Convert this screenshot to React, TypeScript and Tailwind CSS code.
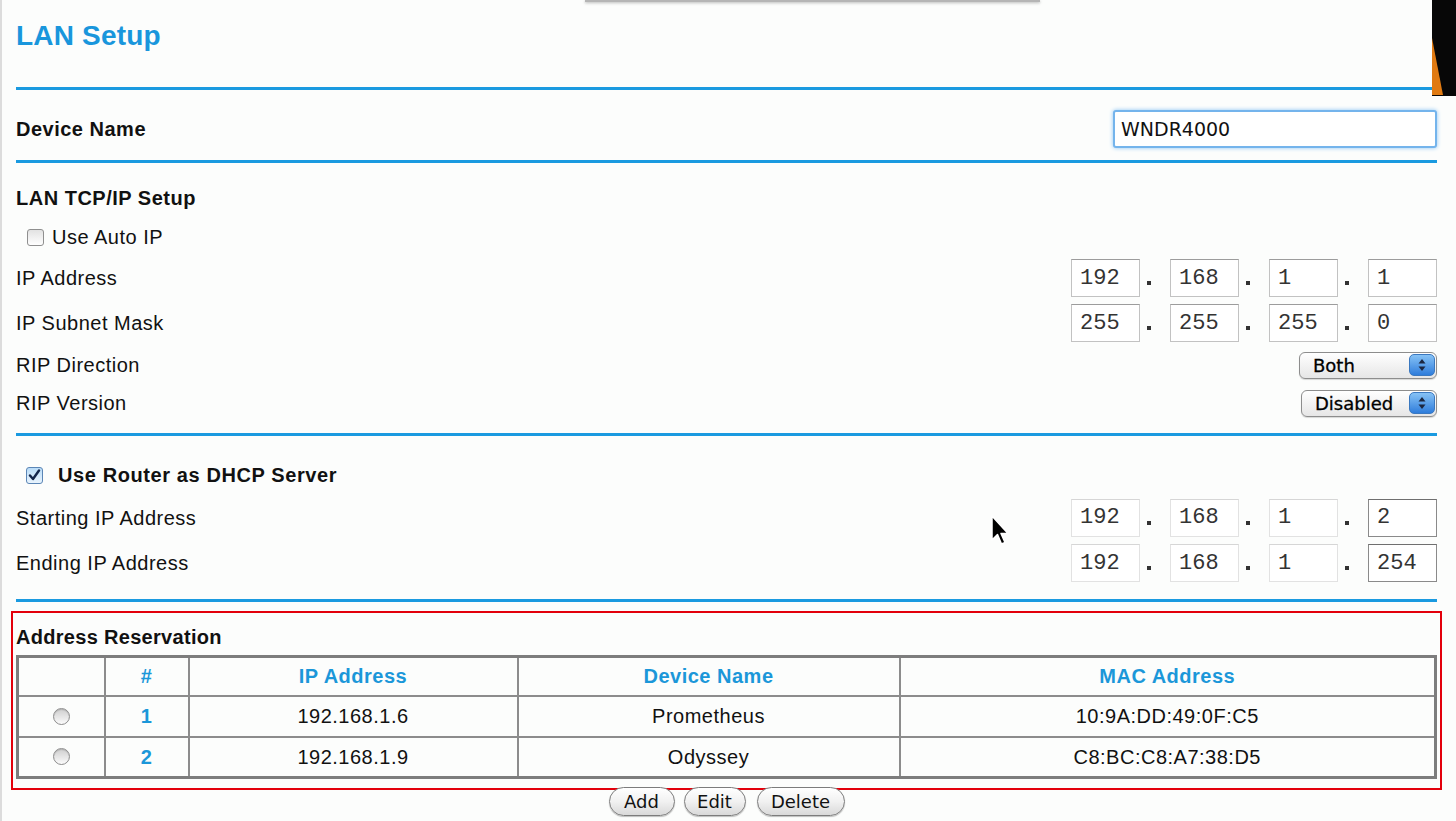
import React from "react";

const ipA = ["192", "168", "1", "1"];
const maskA = ["255", "255", "255", "0"];
const startA = ["192", "168", "1", "2"];
const endA = ["192", "168", "1", "254"];

const reservations = [
  { n: "1", ip: "192.168.1.6", name: "Prometheus", mac: "10:9A:DD:49:0F:C5" },
  { n: "2", ip: "192.168.1.9", name: "Odyssey", mac: "C8:BC:C8:A7:38:D5" },
];

const Rule = () => <div className="h-[3px] bg-[#1a9ae0]" />;

const IpFields = ({ values, faint }: { values: string[]; faint?: boolean }) => (
  <div className="flex items-center">
    {values.map((v, i) => {
      const last = i === values.length - 1;
      const border = faint
        ? last
          ? "border-[#8a8a8a] border-t-[#6f6f6f]"
          : "border-[#e2e2e2] border-t-[#d6d6d6]"
        : "border-[#c2c2c2] border-t-[#9c9c9c]";
      return (
        <React.Fragment key={i}>
          <div
            className={`w-[69px] h-[38px] border bg-white pl-[8px] flex items-center font-['Liberation_Mono',monospace] text-[22px] text-[#333] ${border}`}
          >
            {v}
          </div>
          {!last && (
            <div className="w-[30px] h-[38px] pl-[7px] pt-[22px]">
              <div className="w-[4px] h-[4px] bg-[#333]" />
            </div>
          )}
        </React.Fragment>
      );
    })}
  </div>
);

const Stepper = () => (
  <div className="w-[26px] h-[22px] rounded-[5px] bg-linear-to-b from-[#86c2f5] to-[#2e7ddb] border border-[#3a78c0] flex items-center justify-center">
    <svg width="10" height="14" viewBox="0 0 10 14">
      <path d="M5 1 L8.5 5.5 L1.5 5.5 Z" fill="#1c2740" />
      <path d="M5 13 L8.5 8.5 L1.5 8.5 Z" fill="#1c2740" />
    </svg>
  </div>
);

const Select = ({ label, w }: { label: string; w: string }) => (
  <div
    className={`${w} h-[27px] rounded-[6px] border border-[#8d8d8d] bg-linear-to-b from-white to-[#e6e6e6] shadow-[0_1px_1px_rgba(0,0,0,0.15)] flex items-center justify-between pl-[13px] pr-[1px] font-['DejaVu_Sans',sans-serif] text-[18px] text-black [-webkit-text-stroke:0.3px_black]`}
  >
    <span>{label}</span>
    <Stepper />
  </div>
);

const Label = ({ children }: { children: React.ReactNode }) => (
  <span className="text-[20px] tracking-[0.5px] text-[#111]">{children}</span>
);

const Radio = () => (
  <div className="mx-auto w-[17px] h-[17px] rounded-full border border-[#8e8e8e] bg-linear-to-b from-[#cfcfcf] to-[#fbfbfb] shadow-[inset_0_1px_1px_rgba(0,0,0,0.15)]" />
);

const Btn = ({ label, w }: { label: string; w: string }) => (
  <button
    className={`${w} h-[29px] rounded-full border-[1.5px] border-[#7c7c7c] bg-linear-to-b from-white via-[#f1f1f1] to-[#d9d9d9] shadow-[0_1px_1px_rgba(0,0,0,0.25)] font-['DejaVu_Sans',sans-serif] text-[18px] text-[#111] flex items-center justify-center`}
  >
    {label}
  </button>
);

export default function App() {
  return (
    <div className="relative min-h-[821px] w-full overflow-hidden bg-[#fcfdfc] pl-4 pr-[19px] font-['Liberation_Sans',Arial,sans-serif] text-[#111]">
      {/* bits of other windows that sit over the page */}
      <div className="absolute left-0 top-0 h-full w-[2px] bg-[#dcdcdc]" />
      <div className="absolute left-[585px] top-0 h-[2px] w-[455px] bg-[#b5b5b5] shadow-[0_1px_3px_rgba(0,0,0,0.3)]" />
      <svg className="absolute right-0 top-0" width="24" height="96" viewBox="0 0 24 96">
        <rect width="24" height="96" fill="#070707" />
        <path d="M0 38 L11 95 L0 95 Z" fill="#e07a12" />
      </svg>
      <svg className="absolute left-[990px] top-[515px]" width="20" height="32" viewBox="0 0 20 32">
        <path d="M2 1 L2 25 L7.5 19.5 L11.5 29 L15 27.5 L11 18.5 L18 18.5 Z" fill="#000" stroke="#fff" strokeWidth="1.5" strokeLinejoin="round" />
      </svg>

      <div className="h-[87px] pt-[19px]">
        <h1 className="text-[28px] leading-[34px] font-bold tracking-[0.2px] text-[#1996dc]">LAN Setup</h1>
      </div>
      <div className="mr-[4px]">
        <Rule />
      </div>

      <div className="h-[70px] pt-[8px] flex items-center justify-between">
        <span className="text-[20px] font-bold tracking-[0.5px]">Device Name</span>
        <div className="w-[324px] h-[38px] rounded-[3px] border-2 border-[#74b4ec] shadow-[0_0_4px_#8cc4f4] bg-white pl-[6px] flex items-center font-['DejaVu_Sans',sans-serif] text-[19px] text-[#111]">
          WNDR4000
        </div>
      </div>
      <Rule />

      <div className="mt-[15px] h-[40px] flex items-center">
        <span className="text-[20px] font-bold tracking-[0.5px]">LAN TCP/IP Setup</span>
      </div>
      <div className="h-[38px] flex items-center pl-[11px] gap-[8px]">
        <div className="w-[17px] h-[17px] rounded-[3px] border border-[#8f8f8f] bg-linear-to-b from-[#e2e2e2] to-white" />
        <Label>Use Auto IP</Label>
      </div>
      <div className="h-[44px] flex items-center justify-between">
        <Label>IP Address</Label>
        <IpFields values={ipA} />
      </div>
      <div className="h-[46px] flex items-center justify-between">
        <Label>IP Subnet Mask</Label>
        <IpFields values={maskA} />
      </div>
      <div className="h-[38px] flex items-center justify-between">
        <Label>RIP Direction</Label>
        <Select label="Both" w="w-[138px]" />
      </div>
      <div className="h-[38px] flex items-center justify-between">
        <Label>RIP Version</Label>
        <Select label="Disabled" w="w-[136px]" />
      </div>
      <div className="mt-[11px]">
        <Rule />
      </div>

      <div className="mt-[19px] h-[40px] flex items-center pl-[10px] gap-[15px]">
        <div className="w-[17px] h-[17px] rounded-[3px] border border-[#5b86b6] bg-linear-to-b from-[#b9dcf8] to-[#e9f4fd] flex items-center justify-center">
          <svg width="13" height="13" viewBox="0 0 13 13">
            <path d="M2 6.5 L5 10 L11 1.5" fill="none" stroke="#13254a" strokeWidth="2.4" strokeLinecap="round" strokeLinejoin="round" />
          </svg>
        </div>
        <span className="text-[20px] font-bold tracking-[0.6px]">Use Router as DHCP Server</span>
      </div>
      <div className="h-[45px] flex items-center justify-between">
        <Label>Starting IP Address</Label>
        <IpFields values={startA} faint />
      </div>
      <div className="h-[46px] flex items-center justify-between">
        <Label>Ending IP Address</Label>
        <IpFields values={endA} faint />
      </div>
      <div className="mt-[13px]">
        <Rule />
      </div>

      <div className="mt-[9px] -mx-[5px] border-2 border-[#e3000b] px-[3px] pb-[9px]">
        <div className="h-[42px] pt-[13px]">
          <span className="text-[20px] leading-[22px] font-bold tracking-[0.3px]">Address Reservation</span>
        </div>
        <table className="w-full border-collapse border-[3px] border-[#7d7d7d] text-[20px] tracking-[0.5px]">
          <colgroup>
            <col className="w-[87px]" />
            <col className="w-[84px]" />
            <col className="w-[329px]" />
            <col className="w-[382px]" />
            <col />
          </colgroup>
          <thead>
            <tr className="h-[39px]">
              <th className="border-2 border-[#8c8c8c]" />
              <th className="border-2 border-[#8c8c8c] font-bold text-[#1b97d9]">#</th>
              <th className="border-2 border-[#8c8c8c] font-bold text-[#1b97d9]">IP Address</th>
              <th className="border-2 border-[#8c8c8c] font-bold text-[#1b97d9]">Device Name</th>
              <th className="border-2 border-[#8c8c8c] font-bold text-[#1b97d9]">MAC Address</th>
            </tr>
          </thead>
          <tbody>
            {reservations.map((r) => (
              <tr key={r.n} className="h-[41px] text-center">
                <td className="border-2 border-[#8c8c8c]">
                  <Radio />
                </td>
                <td className="border-2 border-[#8c8c8c] font-bold text-[#1b97d9]">{r.n}</td>
                <td className="border-2 border-[#8c8c8c]">{r.ip}</td>
                <td className="border-2 border-[#8c8c8c]">{r.name}</td>
                <td className="border-2 border-[#8c8c8c]">{r.mac}</td>
              </tr>
            ))}
          </tbody>
        </table>
      </div>

      <div className="-mt-[3px] flex justify-center gap-[9px]">
        <Btn label="Add" w="w-[66px]" />
        <Btn label="Edit" w="w-[62px]" />
        <div className="ml-[2px]">
          <Btn label="Delete" w="w-[88px]" />
        </div>
      </div>
    </div>
  );
}
